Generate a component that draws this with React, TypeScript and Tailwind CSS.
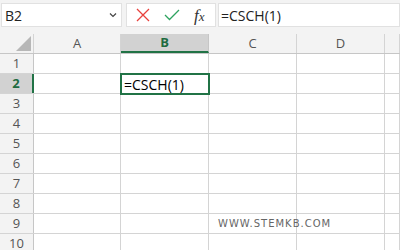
const COLS = ["A", "B", "C", "D", ""];
const WIDTHS = ["w-[87px]", "w-[88px]", "w-[88px]", "w-[88px]", "flex-1"];
const ROWS = [1, 2, 3, 4, 5, 6, 7, 8, 9, 10];

function Cell({ row, col }: { row: number; col: number }) {
  const active = row === 2 && col === 1;
  return (
    <div className={`relative h-full shrink-0 border-r border-[#d4d4d4] ${WIDTHS[col]}`}>
      {active ? (
        <div className="absolute -left-[1px] -top-[1px] z-10 flex h-[22px] w-[90px] items-center border-2 border-[#217346] bg-white pl-[2px] text-[14px] text-black">
          =CSCH(1)
        </div>
      ) : null}
      {row === 9 && col === 2 ? (
        <span className="absolute left-[9px] top-[2px] font-['DejaVu_Sans',sans-serif] text-[10px] tracking-[1px] text-[#666]">
          WWW.STEMKB.COM
        </span>
      ) : null}
    </div>
  );
}

export default function App() {
  return (
    <div className="h-[250px] w-[400px] overflow-hidden bg-white font-['Open_Sans','Noto_Sans',sans-serif]">
      <div className="flex h-[34px] items-start bg-[#f3f3f3] pt-[3px]">
        <div className="ml-[1px] flex h-[24px] w-[121px] items-center justify-between border border-[#e1e1e1] bg-white pl-[3px] pr-[4px] text-[14px] text-[#222]">
          <span>B2</span>
          <svg width="8" height="6" viewBox="0 0 8 6">
            <path d="M1 1.5 L4 4.5 L7 1.5" fill="none" stroke="#444" strokeWidth="1.2" />
          </svg>
        </div>
        <div className="ml-[4px] flex h-[24px] w-[90px] items-center border border-[#e1e1e1] bg-white pl-[9px]">
          <svg width="14" height="14" viewBox="0 0 14 14">
            <path d="M1 1 L13 13 M13 1 L1 13" stroke="#e8413d" strokeWidth="1.3" />
          </svg>
          <svg className="ml-[14px]" width="16" height="12" viewBox="0 0 16 12">
            <path d="M1 6 L5.5 10.5 L15 1" fill="none" stroke="#2ea360" strokeWidth="1.3" />
          </svg>
          <span className="ml-[14px] font-['Liberation_Serif',serif] text-[17px] italic leading-none text-[#333]">
            f<span className="text-[13px]">x</span>
          </span>
        </div>
        <div className="ml-[2px] flex h-[24px] flex-1 items-center border border-[#e1e1e1] bg-white pl-[2px] text-[14px] text-[#222]">
          =CSCH(1)
        </div>
      </div>

      <div className="flex h-[20px] border-b border-[#c6c6c6] bg-[#f3f3f3]">
        <div className="relative h-full w-[34px] shrink-0 border-r border-[#d4d4d4]">
          <svg className="absolute bottom-[2px] right-[2px]" width="15" height="15" viewBox="0 0 15 15">
            <path d="M15 0 L15 15 L0 15 Z" fill="#b7b7b7" />
          </svg>
        </div>
        {COLS.map((c, i) => (
          <div
            key={i}
            className={`flex h-full shrink-0 items-center justify-center border-r text-[13px] ${WIDTHS[i]} ${
              i === 1
                ? "border-[#c6c6c6] border-b-2 border-b-[#217346] bg-[#d2d2d2] font-bold text-[#1e6b41]"
                : "border-[#d4d4d4] text-[#555]"
            }`}
          >
            {c}
          </div>
        ))}
      </div>

      {ROWS.map((r) => (
        <div key={r} className="flex h-[20px] border-b border-[#d4d4d4]">
          <div
            className={`flex h-full w-[34px] shrink-0 items-center justify-center text-[13px] ${
              r === 2
                ? "border-r-2 border-[#217346] bg-[#d2d2d2] font-bold text-[#1e6b41]"
                : "border-r border-[#c6c6c6] bg-[#f3f3f3] text-[#555]"
            }`}
          >
            {r}
          </div>
          {COLS.map((_, i) => (
            <Cell key={i} row={r} col={i} />
          ))}
        </div>
      ))}
    </div>
  );
}
